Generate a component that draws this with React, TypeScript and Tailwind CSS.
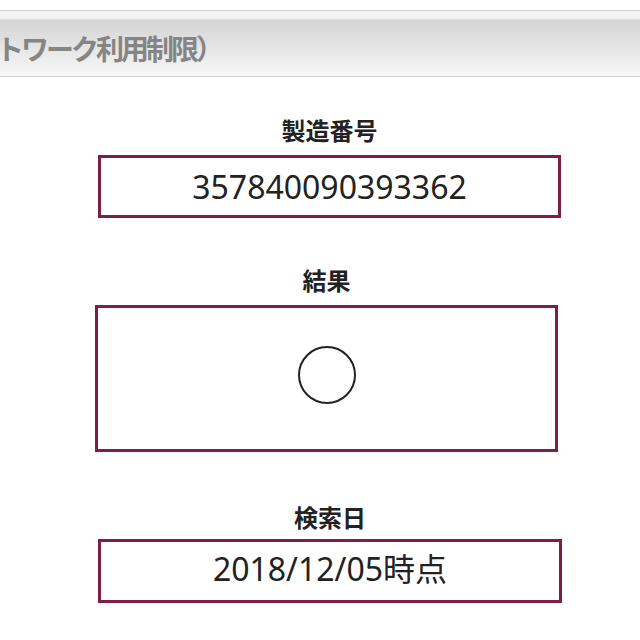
import React from "react";

const labelCls =
  "text-center text-[24px] leading-[24px] font-bold text-[#222] [font-family:'Noto_Sans_CJK_JP',sans-serif]";

export default function App() {
  return (
    <div className="w-[640px] h-[640px] bg-white overflow-hidden relative [font-family:'Noto_Sans','Noto_Sans_CJK_JP',sans-serif]">
      <div className="h-[10px] bg-white" />
      <div className="h-[1px] bg-[#cfcfcf]" />
      <div className="h-[8px] bg-[#f3f3f3]" />
      <div className="h-[1px] bg-[#dedede]" />
      <div className="h-[56px] bg-gradient-to-b from-[#d4d4d4] to-[#f7f7f7] flex items-center overflow-hidden">
        <span className="ml-[-4px] whitespace-nowrap text-[28px] leading-[28px] tracking-[-3px] font-bold text-[#858585] [font-family:'Noto_Sans_CJK_JP',sans-serif]">
          トワーク利用制限）
        </span>
      </div>
      <div className="h-[1px] bg-[#d2d2d2]" />

      <div className="mt-[41px] ml-[98px] w-[463px]">
        <div className={labelCls}>製造番号</div>
      </div>
      <div className="mt-[13px] ml-[98px] w-[463px] h-[63px] border-[3px] border-[#7f1f47] flex items-center justify-center">
        <span className="text-[32px] leading-none text-[#222]">357840090393362</span>
      </div>

      <div className="mt-[50px] ml-[95px] w-[463px]">
        <div className={labelCls}>結果</div>
      </div>
      <div className="mt-[13px] ml-[95px] w-[463px] h-[147px] border-[3px] border-[#7f1f47] flex items-center justify-center">
        <svg width="60" height="60" viewBox="0 0 60 60" className="mt-[-8px]">
          <circle cx="30" cy="30" r="28" fill="none" stroke="#222" strokeWidth="2" />
        </svg>
      </div>

      <div className="mt-[53px] ml-[98px] w-[464px]">
        <div className={labelCls}>検索日</div>
      </div>
      <div className="mt-[10px] ml-[98px] w-[464px] h-[64px] border-[3px] border-[#7f1f47] flex items-center justify-center">
        <span className="text-[32px] leading-none text-[#222] mt-[-4px]">2018/12/05時点</span>
      </div>
    </div>
  );
}
